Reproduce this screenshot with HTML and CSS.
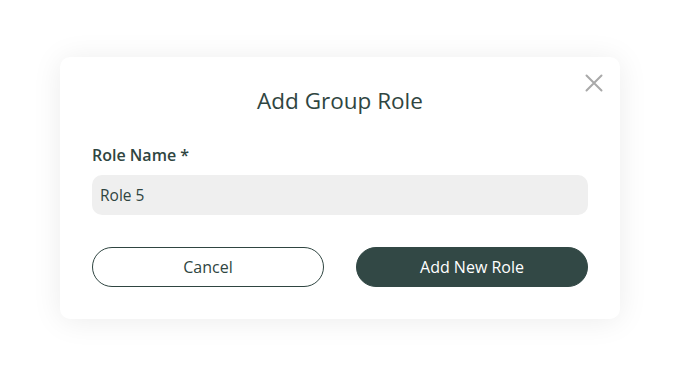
FILE: index.html
```html
<!DOCTYPE html>
<html lang="en">
<head>
  <meta charset="UTF-8" />
  <title>Add Group Role</title>
  <link rel="stylesheet" href="styles.css">
</head>
<body>
  <div class="modal">
    <button class="close-btn" aria-label="Close">
      <svg width="18" height="18" viewBox="0 0 18 18">
        <path d="M1.5 1.5 L16.5 16.5 M16.5 1.5 L1.5 16.5" stroke="#a9a9a9" stroke-width="2" stroke-linecap="round" fill="none"/>
      </svg>
    </button>
    <h2 class="modal-title">Add Group Role</h2>

    <label class="field-label" for="roleName">Role Name *</label>
    <input class="field-input" id="roleName" type="text" value="Role 5">

    <div class="actions">
      <button class="btn btn-outline">Cancel</button>
      <button class="btn btn-solid">Add New Role</button>
    </div>
  </div>
</body>
</html>
```

FILE: styles.css
```css
html, body {
  margin: 0;
  height: 100%;
  background: #fff;
}
body {
  font-family: "Open Sans", sans-serif;
  color: #2f4541;
  display: flex;
  justify-content: center;
  padding-top: 57px;
  box-sizing: border-box;
}
.modal {
  position: relative;
  width: 560px;
  height: 262px;
  box-sizing: border-box;
  padding: 26px 32px 32px;
  background: #fff;
  border-radius: 10px;
  box-shadow: 0 2px 30px rgba(0, 0, 0, 0.08);
}
.close-btn {
  position: absolute;
  top: 17px;
  right: 17px;
  padding: 0;
  border: none;
  background: none;
  width: 18px;
  height: 18px;
  cursor: pointer;
}
.close-btn svg {
  display: block;
}
.modal-title {
  margin: 0 0 25px;
  font-size: 22.5px;
  font-weight: 400;
  line-height: 36px;
  text-align: center;
  color: #2f4541;
}
.field-label {
  display: block;
  font-size: 16px;
  font-weight: 600;
  line-height: 22px;
  margin-bottom: 9px;
}
.field-input {
  display: block;
  width: 100%;
  height: 40px;
  box-sizing: border-box;
  padding: 0 8px;
  border: none;
  border-radius: 10px;
  background: #efefef;
  font-family: inherit;
  font-size: 15.5px;
  color: #2f4541;
  outline: none;
}
.actions {
  display: flex;
  gap: 32px;
  margin-top: 32px;
}
.btn {
  flex: 1;
  height: 40px;
  border-radius: 20px;
  font-family: inherit;
  font-size: 16px;
  cursor: pointer;
}
.btn-outline {
  background: #fff;
  color: #2f4541;
  border: 1px solid #2f4541;
}
.btn-solid {
  background: #324845;
  color: #fff;
  border: 1px solid #324845;
}
```
